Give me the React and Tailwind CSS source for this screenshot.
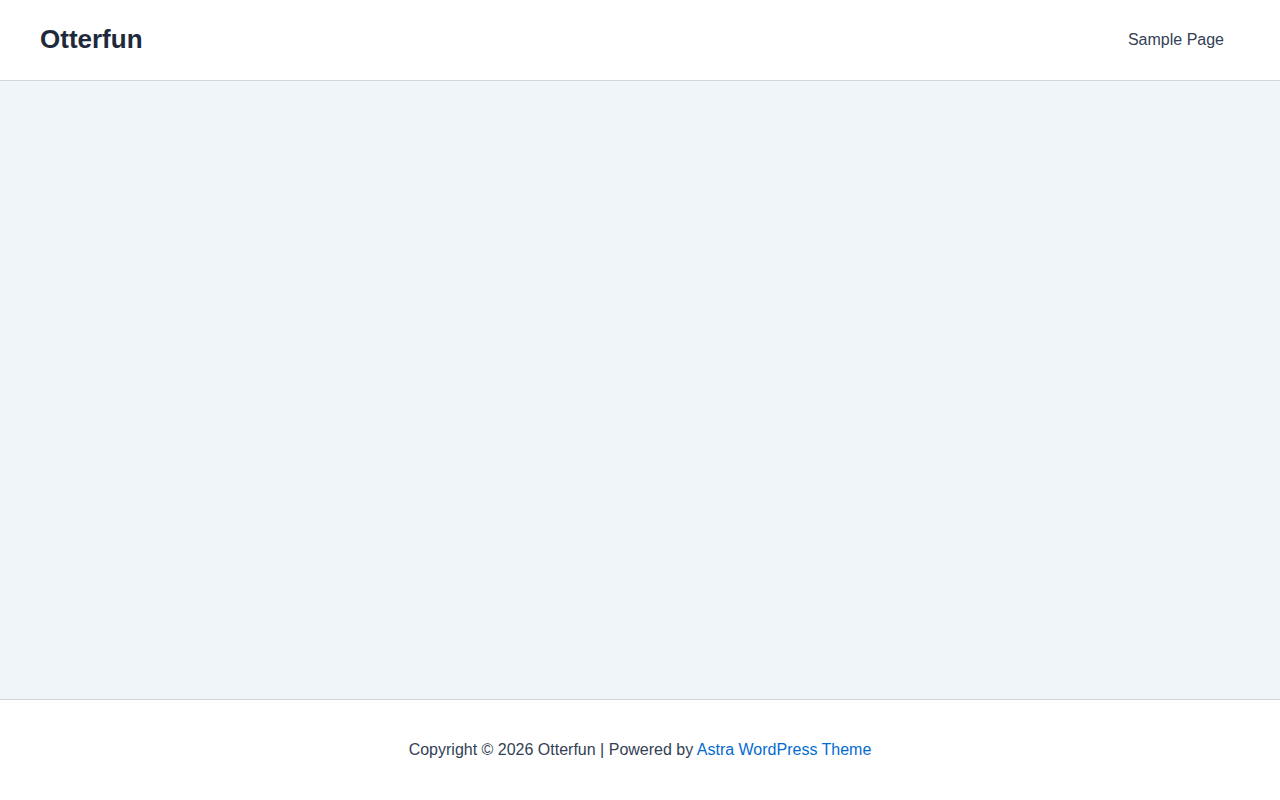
export default function App() {
  return (
    <div className="min-h-screen flex flex-col bg-white text-[#334155] font-['Liberation_Sans',Arial,sans-serif]">
      {/* Header */}
      <header className="h-[81px] shrink-0 flex items-center justify-between px-10 bg-white border-b border-[#d1d5db]">
        <a href="#" className="-mt-[2px] text-[26px] font-bold leading-none text-[#1e293b]">
          Otterfun
        </a>
        <nav>
          <a href="#" className="px-4 text-base text-[#334155]">
            Sample Page
          </a>
        </nav>
      </header>

      {/* Content */}
      <main className="h-[618px] bg-[#f0f5fa]" />

      {/* Footer */}
      <footer className="h-[101px] flex items-center justify-center border-t border-[#d1d5db] bg-white text-base">
        <p>
          Copyright © 2026 Otterfun | Powered by{' '}
          <a href="#" className="text-[#046bd2]">
            Astra WordPress Theme
          </a>
        </p>
      </footer>
    </div>
  )
}
